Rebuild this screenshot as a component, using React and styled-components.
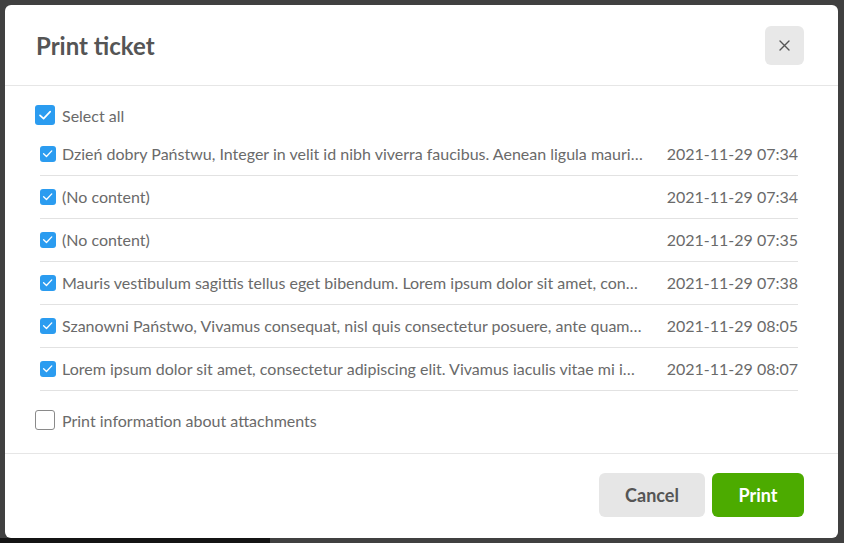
import React from "react";
import styled, { createGlobalStyle } from "styled-components";

const Global = createGlobalStyle`
  html, body {
    margin: 0;
    padding: 0;
    width: 844px;
    height: 543px;
    overflow: hidden;
    font-family: Lato, "Open Sans", sans-serif;
    background:
      linear-gradient(#141414, #141414) 0 538px / 270px 5px no-repeat,
      #404040;
  }
  * { box-sizing: border-box; }
`;

const Backdrop = styled.div`
  width: 844px;
  height: 543px;
  padding: 5px 6px 5px 5px;
`;

const Modal = styled.div`
  width: 833px;
  height: 533px;
  background: #fff;
  border-radius: 6px;
  display: flex;
  flex-direction: column;
`;

const Header = styled.div`
  height: 81px;
  flex: none;
  display: flex;
  align-items: center;
  justify-content: space-between;
  padding: 0 34px 0 31px;
  border-bottom: 1px solid #e6e6e6;
`;

const Title = styled.h2`
  margin: 0;
  font-size: 24px;
  font-weight: 700;
  color: #555;
`;

const CloseButton = styled.button`
  width: 39px;
  height: 39px;
  border: none;
  border-radius: 6px;
  background: #e8e8e8;
  display: flex;
  align-items: center;
  justify-content: center;
  padding: 0;
  margin-top: 1px;
`;

const Body = styled.div`
  flex: 1;
  padding: 19px 40px 0 30px;
  display: flex;
  flex-direction: column;
`;

const CheckLine = styled.label`
  display: flex;
  align-items: center;
  gap: 7px;
  height: 20px;
  font-size: 16px;
  color: #6a6a6a;
  margin-top: ${(p) => p.$mt || 0}px;
`;

const Box = styled.span`
  flex: none;
  width: ${(p) => p.$size}px;
  height: ${(p) => p.$size}px;
  border-radius: 3px;
  background: ${(p) => (p.$checked ? "#2b9cf0" : "#fff")};
  border: ${(p) => (p.$checked ? "none" : "1px solid #8a8a8a")};
  display: flex;
  align-items: center;
  justify-content: center;
`;

const List = styled.div`
  margin-top: 8px;
  margin-left: 5px;
  display: flex;
  flex-direction: column;
`;

const Row = styled.div`
  height: 43px;
  padding-bottom: 1px;
  border-bottom: 1px solid #e2e2e2;
  display: flex;
  align-items: center;
  gap: 6px;
  font-size: 16px;
  color: #6a6a6a;
`;

const RowText = styled.span`
  flex: 1;
  min-width: 0;
  white-space: nowrap;
  overflow: hidden;
  text-overflow: ellipsis;
  padding-right: 18px;
`;

const RowDate = styled.span`
  flex: none;
  white-space: nowrap;
`;

const Footer = styled.div`
  height: 85px;
  flex: none;
  border-top: 1px solid #e6e6e6;
  display: flex;
  align-items: flex-start;
  justify-content: flex-end;
  gap: 7px;
  padding: 19px 34px 0 0;
`;

const Button = styled.button`
  height: 44px;
  width: ${(p) => p.$w}px;
  border: none;
  border-radius: 6px;
  font-family: Lato, "Open Sans", sans-serif;
  font-size: 18px;
  font-weight: 700;
  background: ${(p) => (p.$primary ? "#4cab00" : "#e6e6e6")};
  color: ${(p) => (p.$primary ? "#fff" : "#555")};
`;

const Check = ({ size }) => (
  <svg width={size * 0.7} height={size * 0.7} viewBox="0 0 14 14">
    <path d="M2 7.3 L5.6 10.6 L12.2 3.6" fill="none" stroke="#fff" strokeWidth="1.7" strokeLinecap="round" strokeLinejoin="round" />
  </svg>
);

const CheckBox = ({ checked, size }) => (
  <Box $checked={checked} $size={size}>
    {checked && <Check size={size} />}
  </Box>
);

const rows = [
  ["Dzień dobry Państwu, Integer in velit id nibh viverra faucibus. Aenean ligula mauris ultricies", "2021-11-29 07:34"],
  ["(No content)", "2021-11-29 07:34"],
  ["(No content)", "2021-11-29 07:35"],
  ["Mauris vestibulum sagittis tellus eget bibendum. Lorem ipsum dolor sit amet, consectetur", "2021-11-29 07:38"],
  ["Szanowni Państwo, Vivamus consequat, nisl quis consectetur posuere, ante quam iaculis", "2021-11-29 08:05"],
  ["Lorem ipsum dolor sit amet, consectetur adipiscing elit. Vivamus iaculis vitae mi id tincidunt", "2021-11-29 08:07"],
];

export default function App() {
  return (
    <>
      <Global />
      <Backdrop>
        <Modal>
          <Header>
            <Title>Print ticket</Title>
            <CloseButton aria-label="Close">
              <svg width="11" height="11" viewBox="0 0 11 11">
                <path d="M1 1 L10 10 M10 1 L1 10" stroke="#555" strokeWidth="1.4" strokeLinecap="round" />
              </svg>
            </CloseButton>
          </Header>
          <Body>
            <CheckLine>
              <CheckBox checked size={20} />
              Select all
            </CheckLine>
            <List>
              {rows.map(([t, d], i) => (
                <Row key={i}>
                  <CheckBox checked size={16} />
                  <RowText>{t}</RowText>
                  <RowDate>{d}</RowDate>
                </Row>
              ))}
            </List>
            <CheckLine $mt={19}>
              <CheckBox size={20} />
              Print information about attachments
            </CheckLine>
          </Body>
          <Footer>
            <Button $w={106}>Cancel</Button>
            <Button $w={92} $primary>Print</Button>
          </Footer>
        </Modal>
      </Backdrop>
    </>
  );
}
